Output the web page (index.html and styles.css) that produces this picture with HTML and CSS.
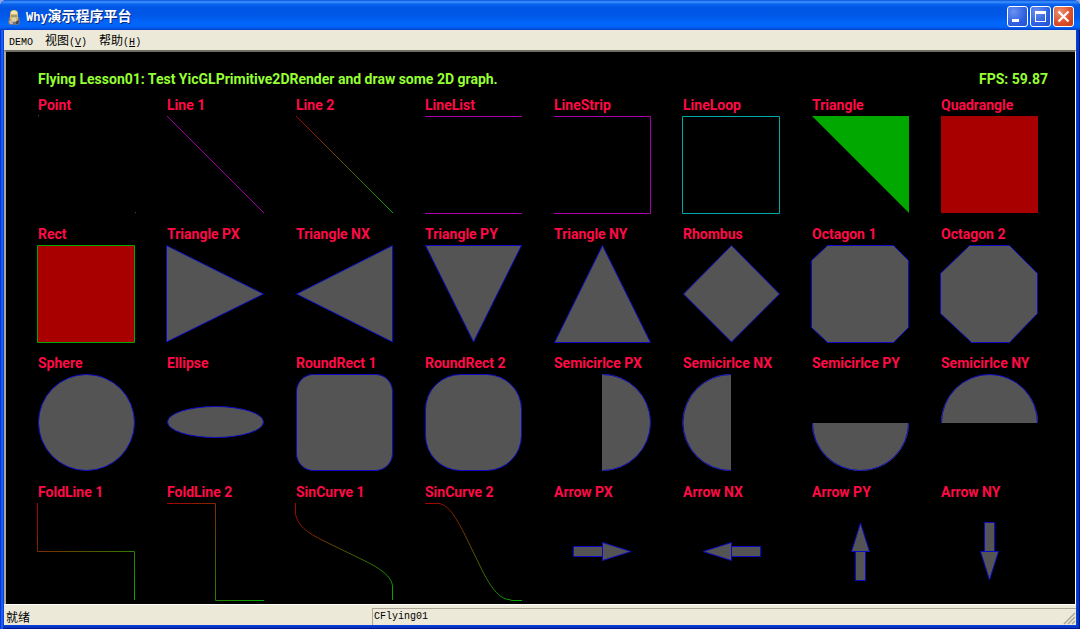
FILE: index.html
```html
<!DOCTYPE html>
<html lang="zh-CN">
<head>
<meta charset="utf-8">
<title>Why演示程序平台</title>
<link rel="stylesheet" href="styles.css">
</head>
<body>
<div class="window">
  <header class="titlebar">
    <svg class="app-icon" viewBox="0 0 16 16" aria-hidden="true">
      <path d="M3 8h10l1 6-2 2H4l-2-2z" fill="#6e7488"/>
      <path d="M3 12l3-1 1 4H4z" fill="#c9b9a2"/>
      <path d="M10 11l3 1-1 3h-2z" fill="#3e4356"/>
      <rect x="4" y="1" width="8" height="12" rx="4" fill="#d9b96a"/>
      <path d="M5 3q3-3 6 0v2H5z" fill="#f3e6b4"/>
      <path d="M5 6h6v2H5z" fill="#a59a78"/>
      <path d="M6 9h4v3H6z" fill="#d8d2b8"/>
    </svg>
    <h1 class="title"><span class="latin">Why</span>演示程序平台</h1>
    <div class="controls">
      <button class="control" type="button" aria-label="Minimize"><svg viewBox="0 0 21 21"><path d="M5 13h7v3H5z" fill="#fff"/></svg></button>
      <button class="control" type="button" aria-label="Maximize"><svg viewBox="0 0 21 21"><path d="M5 5h11v11H5zM6 8v7h9V8z" fill="#fff" fill-rule="evenodd"/></svg></button>
      <button class="control close" type="button" aria-label="Close"><svg viewBox="0 0 21 21"><path d="M5.500 5.500l10 10M15.500 5.500l-10 10" stroke="#fff" stroke-width="2.200"/></svg></button>
    </div>
  </header>
  <nav class="menubar">
    <button class="menu" type="button"><span class="latin">DEMO</span></button>
    <button class="menu" type="button">视图<span class="latin">(<u>V</u>)</span></button>
    <button class="menu" type="button">帮助<span class="latin">(<u>H</u>)</span></button>
  </nav>
  <main class="canvas">
    <div class="info"><span>Flying Lesson01: Test YicGLPrimitive2DRender and draw some 2D graph.</span><span>FPS: 59.87</span></div>
    <div class="shapes">
      <figure class="cell"><figcaption>Point</figcaption><svg viewBox="0 0 97 97"><path d="M0-1h1v1H0zM97 96h1v1h-1z" fill="#0a7a20"/></svg></figure>
      <figure class="cell"><figcaption>Line 1</figcaption><svg viewBox="0 0 97 97"><path class="line violet" d="M0 0L97 97"/></svg></figure>
      <figure class="cell"><figcaption>Line 2</figcaption><svg viewBox="0 0 97 97"><defs><linearGradient id="fade" gradientUnits="userSpaceOnUse" x1="0" y1="0" x2="97" y2="97"><stop offset="0" stop-color="#a80000"/><stop offset="1" stop-color="#00a800"/></linearGradient></defs><path class="line fade" d="M0 0L97 97"/></svg></figure>
      <figure class="cell"><figcaption>LineList</figcaption><svg viewBox="0 0 97 97"><path class="line violet" d="M0 .5H97M0 97.500H97"/></svg></figure>
      <figure class="cell"><figcaption>LineStrip</figcaption><svg viewBox="0 0 97 97"><path class="line violet" d="M0 .5H96.500V97.500H0"/></svg></figure>
      <figure class="cell"><figcaption>LineLoop</figcaption><svg viewBox="0 0 97 97"><path class="line teal" d="M-.5 .5H96.500V97.500H-.5z"/></svg></figure>
      <figure class="cell"><figcaption>Triangle</figcaption><svg viewBox="0 0 97 97"><path class="green" d="M0 0H97V97z"/></svg></figure>
      <figure class="cell"><figcaption>Quadrangle</figcaption><svg viewBox="0 0 97 97"><path class="red" d="M0 0H97V97H0z"/></svg></figure>

      <figure class="cell"><figcaption>Rect</figcaption><svg viewBox="0 0 97 97"><path class="red outlined" d="M-.5 .5H96.500V97.500H-.5z"/></svg></figure>
      <figure class="cell"><figcaption>Triangle PX</figcaption><svg viewBox="0 0 97 97"><path class="solid" d="M-.5 .5L96.500 49L-.5 97z"/></svg></figure>
      <figure class="cell"><figcaption>Triangle NX</figcaption><svg viewBox="0 0 97 97"><path class="solid" d="M96.500 .5L.5 49L96.500 97z"/></svg></figure>
      <figure class="cell"><figcaption>Triangle PY</figcaption><svg viewBox="0 0 97 97"><path class="solid" d="M.5 .5H96.500L48.500 97z"/></svg></figure>
      <figure class="cell"><figcaption>Triangle NY</figcaption><svg viewBox="0 0 97 97"><path class="solid" d="M.5 97.500H96.500L48.500 .5z"/></svg></figure>
      <figure class="cell"><figcaption>Rhombus</figcaption><svg viewBox="0 0 97 97"><path class="solid" d="M48.500 .5L96.500 49L48.500 97L.5 49z"/></svg></figure>
      <figure class="cell"><figcaption>Octagon 1</figcaption><svg viewBox="0 0 97 97"><path class="solid" d="M15.500 .5H81.500L96.500 15.500V82.500L81.500 97.500H15.500L-.5 82.500V15.500z"/></svg></figure>
      <figure class="cell"><figcaption>Octagon 2</figcaption><svg viewBox="0 0 97 97"><path class="solid" d="M28.500 .5H68.500L96.500 28.500V68.500L68.500 97.500H30.500L-.5 68.500V28.500z"/></svg></figure>

      <figure class="cell"><figcaption>Sphere</figcaption><svg viewBox="0 0 97 97"><circle class="solid" cx="48.500" cy="48.500" r="48"/></svg></figure>
      <figure class="cell"><figcaption>Ellipse</figcaption><svg viewBox="0 0 97 97"><ellipse class="solid" cx="48.500" cy="48" rx="48" ry="15.500"/></svg></figure>
      <figure class="cell"><figcaption>RoundRect 1</figcaption><svg viewBox="0 0 97 97"><rect class="solid" x=".5" y=".5" width="96" height="96" rx="17"/></svg></figure>
      <figure class="cell"><figcaption>RoundRect 2</figcaption><svg viewBox="0 0 97 97"><rect class="solid" x=".5" y=".5" width="96" height="96" rx="35"/></svg></figure>
      <figure class="cell"><figcaption>Semicirlce PX</figcaption><svg viewBox="0 0 97 97"><path class="fill" d="M48 0a48.500 48.500 0 0 1 0 97z"/><path class="line blue" d="M48.500 .5a48 48 0 0 1 0 96"/></svg></figure>
      <figure class="cell"><figcaption>Semicirlce NX</figcaption><svg viewBox="0 0 97 97"><path class="fill" d="M48 0a48.500 48.500 0 0 0 0 97z"/><path class="line blue" d="M48 .5a48 48 0 0 0 0 96"/></svg></figure>
      <figure class="cell"><figcaption>Semicirlce PY</figcaption><svg viewBox="0 0 97 97"><path class="fill" d="M0 49a48.500 48 0 0 0 97 0z"/><path class="line blue" d="M.5 49a48 47.500 0 0 0 96 0"/></svg></figure>
      <figure class="cell"><figcaption>Semicirlce NY</figcaption><svg viewBox="0 0 97 97"><path class="fill" d="M0 49a48.500 48.500 0 0 1 97 0z"/><path class="line blue" d="M.5 49a48 48.500 0 0 1 96 0"/></svg></figure>

      <figure class="cell"><figcaption>FoldLine 1</figcaption><svg viewBox="0 0 97 97"><path class="line fade" d="M-.5 0V48.500H96.500V97"/></svg></figure>
      <figure class="cell"><figcaption>FoldLine 2</figcaption><svg viewBox="0 0 97 97"><path class="line fade" d="M0 .5H48.500V97.500H97"/></svg></figure>
      <figure class="cell"><figcaption>SinCurve 1</figcaption><svg viewBox="0 0 97 97"><path class="line fade" d="M-.5 0V10C1 24 14 31 30 39L65 56C82 64 96.500 73 96.500 84V97"/></svg></figure>
      <figure class="cell"><figcaption>SinCurve 2</figcaption><svg viewBox="0 0 97 97"><path class="line fade" d="M0 .5H14C24 2 31 15 39 30L57 67C65 83 74 96 84 96.500L87 97.500H97"/></svg></figure>
      <figure class="cell"><figcaption>Arrow PX</figcaption><svg viewBox="0 0 97 97"><path class="solid" d="M19.500 43.500H48.500V53.500H19.500zM48.500 39.500L77 48.500L48.500 57.500z"/></svg></figure>
      <figure class="cell"><figcaption>Arrow NX</figcaption><svg viewBox="0 0 97 97"><path class="solid" d="M48.500 43.500H77.500V53.500H48.500zM48.500 39.500L20 48.500L48.500 57.500z"/></svg></figure>
      <figure class="cell"><figcaption>Arrow PY</figcaption><svg viewBox="0 0 97 97"><path class="solid" d="M43.500 48.500H53.500V77.500H43.500zM39.500 48.500L48.500 20L57.500 48.500z"/></svg></figure>
      <figure class="cell"><figcaption>Arrow NY</figcaption><svg viewBox="0 0 97 97"><path class="solid" d="M43.500 19.500H53.500V48.500H43.500zM39.500 48.500L48.500 77L57.500 48.500z"/></svg></figure>
    </div>
  </main>
  <footer class="statusbar">
    <span class="ready">就绪</span>
    <span class="pane"><span class="latin">CFlying01</span>
      <svg class="grip" viewBox="0 0 13 13" aria-hidden="true"><path d="M1 12L12 1M5 12l7-7M9 12l3-3" stroke="#aca899" stroke-width="1.500"/></svg>
    </span>
  </footer>
</div>
</body>
</html>
```
FILE: styles.css
```css
* { box-sizing: border-box; }

body {
  margin: 0;
  background: #8aa8e8;
  font: 12px/16px "Noto Sans CJK SC", sans-serif;
  color: #000;
}

button { border: 0; padding: 0; background: none; font: inherit; color: inherit; }

.latin { font-family: "Liberation Mono", monospace; font-size: 10px; }

.window {
  display: flex;
  flex-direction: column;
  min-height: 100vh;
  padding: 0 4px 4px;
  border-radius: 7px 7px 0 0;
  background: #0a40d8;
  box-shadow: inset 1px 0 #0831d9, inset 3px 0 #1660f0, inset -1px -1px #00138c, inset -3px -3px #0436c4;
  overflow: hidden;
}

.titlebar {
  display: flex;
  align-items: center;
  gap: 4px;
  height: 30px;
  margin: 0 -4px;
  padding: 3px 6px 0;
  background: linear-gradient(#0a4fd8 0, #3d95ff 2px, #0b63f0 4px, #0055e3 8px, #0058e8 16px, #0266fc 23px, #0264f8 27px, #0040c8 30px);
}

.app-icon { width: 16px; height: 16px; }

.title {
  flex: 1;
  margin: 0;
  font: bold 14px/18px "Noto Sans CJK SC", sans-serif;
  color: #fff;
  text-shadow: 1px 1px #0a2a80;
}

.title .latin { font-size: 12px; }

.controls { display: flex; gap: 2px; }

.control {
  width: 21px;
  height: 21px;
  border: 1px solid #fff;
  border-radius: 3px;
  background: radial-gradient(circle at 30% 25%, #6a92f0, #2e60e2 60%, #2450cf);
}

.control.close { background: radial-gradient(circle at 30% 25%, #ec9070, #dc4c28 60%, #c33c18); }
.control svg { display: block; width: 21px; height: 21px; margin: -1px; }

.menubar {
  display: flex;
  gap: 12px;
  height: 20px;
  padding: 2px 5px;
  background: #ece9d8;
}

.canvas {
  flex: 1;
  padding: 19px 37px 3px 32px;
  border: solid;
  border-width: 2px 1px 0 2px;
  border-color: #716f64 #fff #fff #aca899;
  background: #000;
  font: bold 14px/16px Roboto, sans-serif;
}

.info {
  display: flex;
  justify-content: space-between;
  margin-right: -10px;
  color: #96ff32;
}

.shapes {
  display: grid;
  grid-template-columns: repeat(8, minmax(0, 1fr));
  gap: 13px 32px;
  padding-top: 10px;
}

.cell { margin: 0; white-space: nowrap; color: #ff0a46; }
.cell svg { display: block; width: 100%; margin-top: 3px; overflow: visible; }

.line { fill: none; stroke-width: 1px; }
.violet { stroke: #a800a8; }
.teal { stroke: #00a8a8; }
.blue { stroke: #0a0ac8; }
.fade { stroke: url(#fade); }
.green { fill: #00a800; }
.red { fill: #a80000; }
.outlined { stroke: #00a800; }
.fill { fill: #545454; }
.solid { fill: #545454; stroke: #0a0ac8; }

.statusbar {
  display: flex;
  align-items: flex-end;
  height: 21px;
  background: #ece9d8;
  border-top: 1px solid #fff;
}

.ready { width: 368px; padding: 0 2px; }

.pane {
  display: flex;
  flex: 1;
  justify-content: space-between;
  border: solid #aca899;
  border-width: 1px 0 0 1px;
  padding-left: 1px;
}

.grip { width: 13px; height: 13px; margin-top: 3px; }
```
